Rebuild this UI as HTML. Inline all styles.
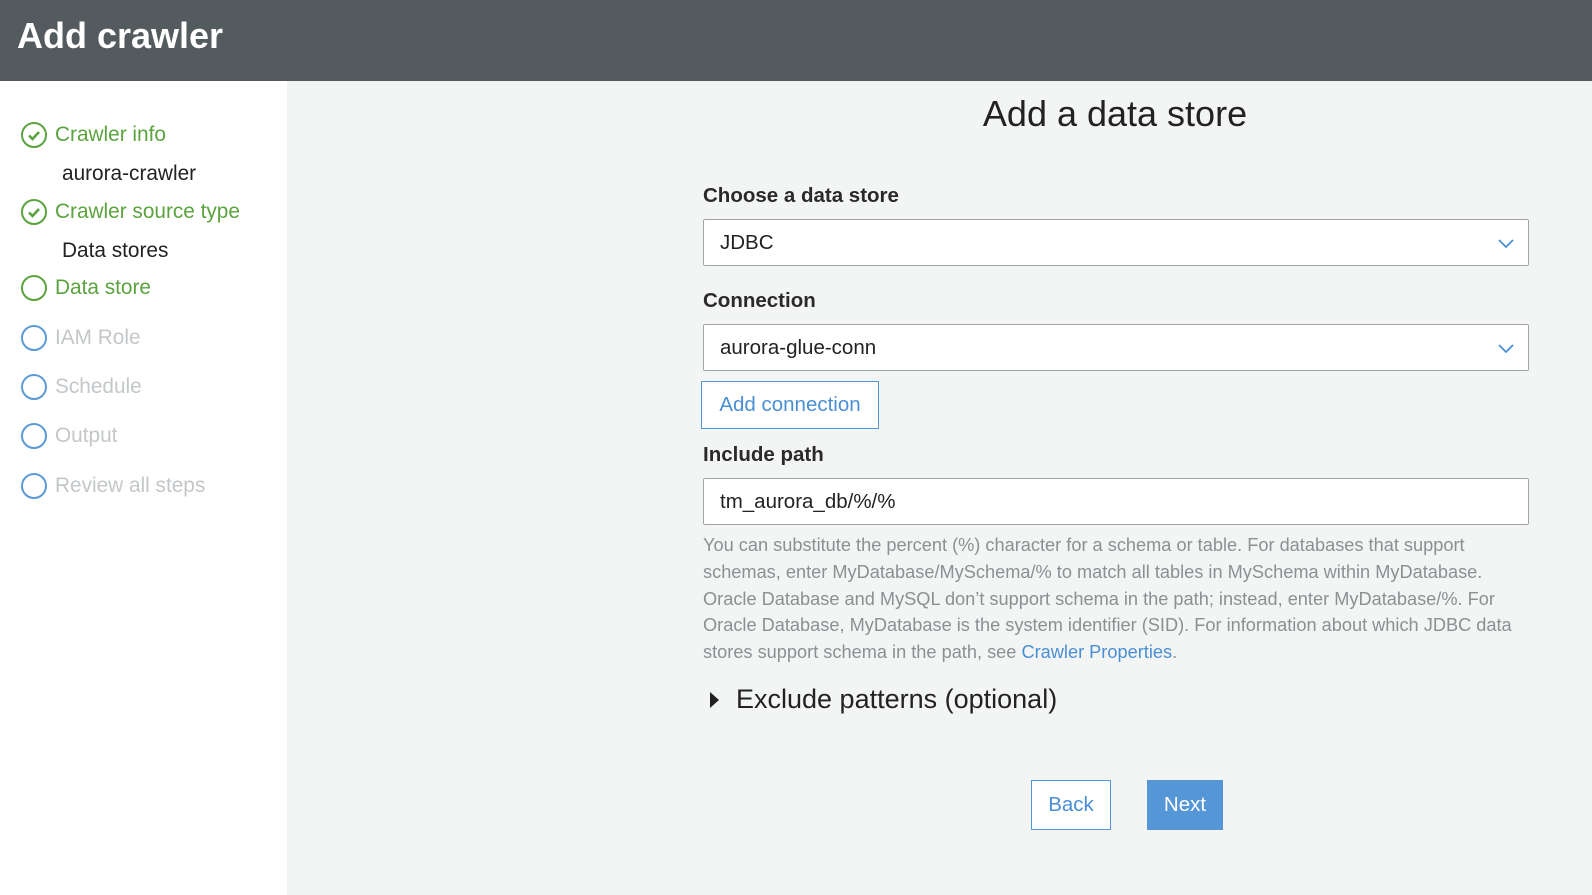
<!DOCTYPE html>
<html><head><meta charset="utf-8"><style>
*{margin:0;padding:0;box-sizing:border-box}
body{width:1592px;height:895px;position:relative;overflow:hidden;background:#f3f4f4;font-family:"Liberation Sans",Arial,sans-serif;color:#222}
.hdr{position:absolute;left:0;top:0;width:1592px;height:81px;background:#545b5f;color:#fff;font-weight:bold;font-size:36px;padding:15px 0 0 17px}
.side{position:absolute;left:0;top:81px;width:287px;height:814px;background:#fff}
.it{position:absolute;left:55px;font-size:20.8px;line-height:24px;white-space:nowrap}
.g{color:#5aa33e}.gr{color:#c3c7c9}.sub{left:62px;color:#222}
.ic{position:absolute;left:21px;width:26px;height:26px;border-radius:50%;border:2.5px solid}
.a{position:absolute;white-space:nowrap}
.lbl{font-weight:bold;font-size:20.5px;left:703px;color:#2a2a2a}
.box{position:absolute;left:703px;width:826px;height:47px;background:#fff;border:1px solid #a0a4a7;border-radius:2px;font-size:20.5px;padding:0 0 0 16px;line-height:45px}
.chev{position:absolute;right:14px;top:19px}
.help{position:absolute;left:703px;top:532px;width:880px;white-space:nowrap;font-size:18.2px;line-height:26.8px;color:#8b9093}
.btn{position:absolute;font-size:20.5px;text-align:center}
</style></head><body>
<div class="hdr">Add crawler</div>
<div class="side"></div>
<div class="ic" style="top:122px;border-color:#5aa33e"></div>
<svg class="a" style="left:26px;top:127px" width="16" height="16"><path d="M3 8.5l3.5 3.5 6.5-7" fill="none" stroke="#5aa33e" stroke-width="2.6"/></svg>
<div class="it g" style="top:123px">Crawler info</div>
<div class="it sub" style="top:162px">aurora-crawler</div>
<div class="ic" style="top:199px;border-color:#5aa33e"></div>
<svg class="a" style="left:26px;top:204px" width="16" height="16"><path d="M3 8.5l3.5 3.5 6.5-7" fill="none" stroke="#5aa33e" stroke-width="2.6"/></svg>
<div class="it g" style="top:200px">Crawler source type</div>
<div class="it sub" style="top:239px">Data stores</div>
<div class="ic" style="top:275px;border-color:#5aa33e"></div>
<div class="it g" style="top:276px">Data store</div>
<div class="ic" style="top:325px;border-color:#5c9ad6;border-width:2px"></div>
<div class="it gr" style="top:326px">IAM Role</div>
<div class="ic" style="top:374px;border-color:#5c9ad6;border-width:2px"></div>
<div class="it gr" style="top:375px">Schedule</div>
<div class="ic" style="top:423px;border-color:#5c9ad6;border-width:2px"></div>
<div class="it gr" style="top:424px">Output</div>
<div class="ic" style="top:473px;border-color:#5c9ad6;border-width:2px"></div>
<div class="it gr" style="top:474px">Review all steps</div>

<div class="a" style="left:0;width:2230px;top:93px;text-align:center;font-size:36px">Add a data store</div>
<div class="a lbl" style="top:184px">Choose a data store</div>
<div class="box" style="top:219px">JDBC<svg class="chev" width="16" height="10"><path d="M1 1l7 7 7-7" fill="none" stroke="#4a8fd4" stroke-width="1.8"/></svg></div>
<div class="a lbl" style="top:289px">Connection</div>
<div class="box" style="top:324px">aurora-glue-conn<svg class="chev" width="16" height="10"><path d="M1 1l7 7 7-7" fill="none" stroke="#4a8fd4" stroke-width="1.8"/></svg></div>
<div class="btn" style="left:701px;top:381px;width:178px;height:48px;background:#fff;border:1.5px solid #5596d6;color:#4a8fd4;line-height:45px">Add connection</div>
<div class="a lbl" style="top:443px">Include path</div>
<div class="box" style="top:478px">tm_aurora_db/%/%</div>
<div class="help">You can substitute the percent (%) character for a schema or table. For databases that support<br>schemas, enter MyDatabase/MySchema/% to match all tables in MySchema within MyDatabase.<br>Oracle Database and MySQL don’t support schema in the path; instead, enter MyDatabase/%. For<br>Oracle Database, MyDatabase is the system identifier (SID). For information about which JDBC data<br>stores support schema in the path, see <span style="color:#4a8fd4">Crawler Properties</span>.</div>
<svg class="a" style="left:710px;top:692px" width="10" height="16"><path d="M0 0l9 8-9 8z" fill="#222"/></svg>
<div class="a" style="left:736px;top:684px;font-size:27px">Exclude patterns (optional)</div>
<div class="btn" style="left:1031px;top:780px;width:80px;height:50px;background:#fff;border:1.5px solid #5596d6;color:#4a8fd4;line-height:47px">Back</div>
<div class="btn" style="left:1147px;top:780px;width:76px;height:50px;background:#5596d6;color:#fff;line-height:50px">Next</div>
</body></html>
